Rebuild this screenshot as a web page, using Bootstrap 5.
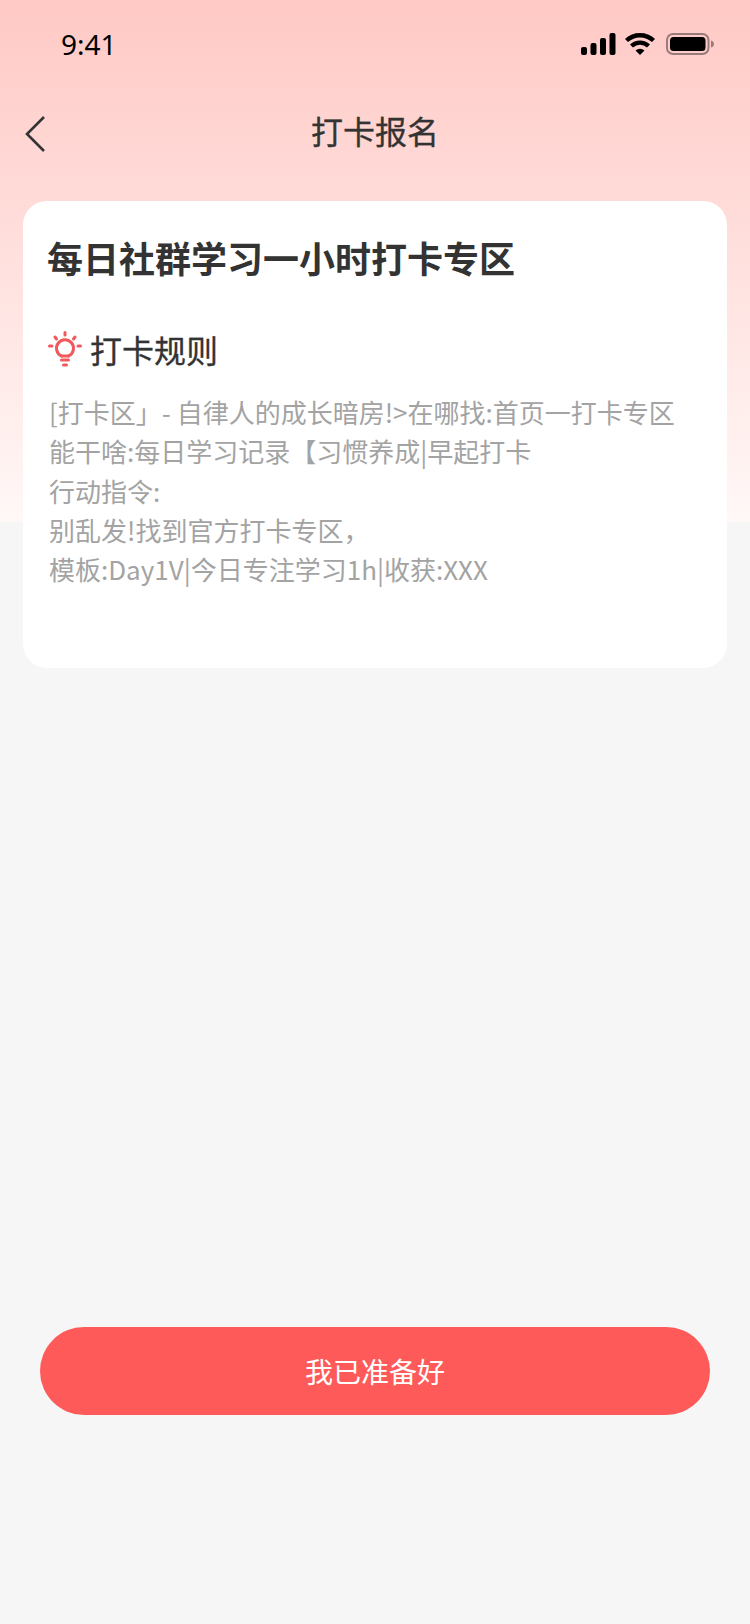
<!DOCTYPE html>
<html lang="zh-CN">
<head>
    <meta charset="UTF-8">
    <meta name="viewport" content="width=device-width, initial-scale=1.0">
    <title>打卡报名</title>
    <link href="https://cdn.jsdelivr.net/npm/bootstrap@5.3.3/dist/css/bootstrap.min.css" rel="stylesheet">
    <style>
        html, body { height: 100%; }
        body {
            font-family: "Noto Sans CJK SC", "Noto Sans", sans-serif;
            color: #333;
            background: #f6f6f6 linear-gradient(180deg, #ffc9c5 0%, #fff8f7 100%) no-repeat;
            background-size: 100% 522px;
        }
        .app-page { width: 750px; height: 1624px; overflow: hidden; }
        .status-row { height: 88px; padding: 0 36px 0 61px; }
        .status-time { font-family: "Noto Sans", sans-serif; font-size: 28px; line-height: 1; color: #000; }
        .nav-row { height: 88px; padding: 0 25px 4px; }
        .nav-back { margin-top: 8px; }
        .nav-title { flex: 1; text-align: center; font-size: 32px; font-weight: 400; line-height: 1; margin-right: 20px; -webkit-text-stroke: .3px #333; }
        .rule-card { margin: 25px 23px 0; height: 467px; background: #fff; border-radius: 24px; padding: 32px 24px 0; }
        .rule-title { font-size: 36px; font-weight: 700; line-height: 48px; margin: 0; }
        .rule-head { margin-top: 44px; gap: 8px; font-size: 32px; font-weight: 400; line-height: 48px; -webkit-text-stroke: .3px #333; }
        .rule-icon { margin-left: 1px; }
        .rule-text { margin: 19px 0 0 2px; font-size: 26px; font-weight: 400; line-height: 39.3px; color: #a3a3a3; white-space: pre-line; }
        .ready-btn {
            display: block; width: 670px; height: 88px; margin: 659px auto 0;
            background: #ff5a5a; color: #fff; border: 0; border-radius: 44px;
            font-size: 28px; font-weight: 400;
        }
        .ready-btn:hover, .ready-btn:active { background: #ff5a5a !important; color: #fff !important; }
    </style>
</head>
<body>

<div class="app-page">
    <!-- 状态栏 -->
    <div class="status-row d-flex align-items-center justify-content-between">
        <span class="status-time">9:41</span>
        <svg width="133" height="22" viewBox="0 0 133 22">
            <rect x="0" y="14" width="6" height="8" rx="2"/>
            <rect x="9.5" y="10" width="6" height="12" rx="2"/>
            <rect x="19" y="5" width="6" height="17" rx="2"/>
            <rect x="28.5" y="0" width="6" height="22" rx="2"/>
            <path d="M45.5 7.5 A 20 20 0 0 1 72.5 7.5" fill="none" stroke="#000" stroke-width="4.4"/>
            <path d="M50.5 13 A 12.5 12.5 0 0 1 67.5 13" fill="none" stroke="#000" stroke-width="4.4"/>
            <path d="M54.5 17.5 L59 22 L63.5 17.5 A 7 7 0 0 0 54.5 17.5 Z"/>
            <rect x="86" y="1" width="41.5" height="20" rx="6" fill="none" stroke="#000" stroke-opacity=".4" stroke-width="2"/>
            <rect x="89" y="4" width="35.5" height="14" rx="3.5"/>
            <path d="M130 7.5 C132 8 133 9.5 133 11 C133 12.5 132 14 130 14.5 Z" fill-opacity=".4"/>
        </svg>
    </div>

    <!-- 标题栏 -->
    <div class="nav-row d-flex align-items-center">
        <svg class="nav-back" width="20" height="36" viewBox="0 0 20 36" fill="none" stroke="#333" stroke-width="2.6">
            <path d="M19 1 L2 18 L19 35"/>
        </svg>
        <div class="nav-title">打卡报名</div>
    </div>

    <!-- 规则卡片 -->
    <div class="rule-card">
        <h1 class="rule-title">每日社群学习一小时打卡专区</h1>
        <div class="rule-head d-flex align-items-center">
            <svg class="rule-icon" width="34" height="36" viewBox="0 0 34 36" fill="none" stroke="#f0595d" stroke-width="3" stroke-linecap="round">
                <path d="M13.5 25 A 8.5 8.5 0 1 1 20.5 25"/>
                <path d="M13.5 25 H20.5"/>
                <path d="M17 1.5 V4 M7 6 L8.5 8 M27 6 L25.5 8 M1.5 15 H4 M30 15 H32.5"/>
                <path d="M13.5 29 H20.5 M15.5 34 H18.5"/>
            </svg>
            <span>打卡规则</span>
        </div>
        <p class="rule-text">[打卡区」- 自律人的成长暗房!&gt;在哪找:首页一打卡专区
能干啥:每日学习记录【习惯养成|早起打卡
行动指令:
别乱发!找到官方打卡专区，
模板:Day1V|今日专注学习1h|收获:XXX</p>
    </div>

    <button type="button" class="btn ready-btn">我已准备好</button>
</div>

<script src="https://cdn.jsdelivr.net/npm/bootstrap@5.3.3/dist/js/bootstrap.bundle.min.js"></script>
</body>
</html>
